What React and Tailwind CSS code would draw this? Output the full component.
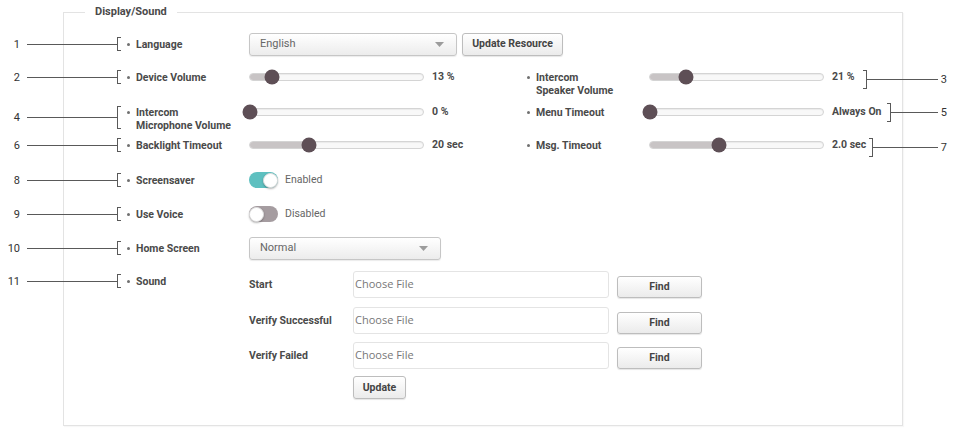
import React from 'react'

const line = 'bg-[#595959]'

function LeftCallout({ n, box = 'h-[24px]', bracket = 'h-[14px]' }) {
  return (
    <div className={`absolute top-0 left-[-127px] flex w-[121px] items-center ${box}`}>
      <span className="w-[20px] text-right text-[11px] leading-none text-[#333]">{n}</span>
      <div className={`ml-[7px] h-px flex-1 ${line}`} />
      <div className={`w-[4px] border-y border-l border-[#595959] ${bracket}`} />
    </div>
  )
}

function RightCallout({ n, gap, box = 'h-[24px]', bracket = 'h-[18px]' }) {
  return (
    <div className={`flex flex-1 items-center ${gap} ${box}`}>
      <div className={`w-[4px] border-y border-r border-[#595959] ${bracket}`} />
      <div className={`h-px flex-1 ${line}`} />
      <span className="ml-[3px] text-[11px] leading-none text-[#333]">{n}</span>
    </div>
  )
}

function Label({ children }) {
  return (
    <div className="flex w-[122px] shrink-0 items-start">
      <div className="flex h-[24px] w-[9px] shrink-0 items-center">
        <span className="h-[3px] w-[3px] rounded-full bg-[#707070]" />
      </div>
      <div className="pt-[6px] text-[10.5px] leading-[13px] font-bold text-[#4a4a4a]">{children}</div>
    </div>
  )
}

function Slider({ pct }) {
  return (
    <div className="flex h-[24px] w-[175px] shrink-0 items-center">
      <div className="relative h-[8px] w-full rounded-full border border-[#d4d4d4] bg-[#f8f8f8] shadow-[inset_0_1px_1px_rgba(0,0,0,0.06)]">
        <div className="h-full rounded-l-full bg-[#c8c4c5]" style={{ width: `${pct}%` }} />
        <div
          className="absolute top-1/2 h-[15px] w-[15px] -translate-x-1/2 -translate-y-1/2 rounded-full bg-[#5e4f56]"
          style={{ left: `${pct}%` }}
        />
      </div>
    </div>
  )
}

function Value({ children, w = 'w-[95px]' }) {
  return (
    <div className={`ml-[8px] shrink-0 text-[10.5px] leading-[24px] font-bold text-[#4a4a4a] ${w}`}>{children}</div>
  )
}

function Toggle({ on, text }) {
  return (
    <div className="flex h-[24px] items-center">
      <div
        className={`flex h-[16px] w-[29px] items-center rounded-full ${
          on ? 'justify-end bg-[#5ec0c0]' : 'justify-start bg-[#a59ca0]'
        }`}
      >
        <span className="h-[15px] w-[15px] rounded-full border border-[#e0e0e0] bg-white shadow-[0_1px_2px_rgba(0,0,0,0.3)]" />
      </div>
      <span className="ml-[7px] text-[10.5px] text-[#666]">{text}</span>
    </div>
  )
}

function Select({ value, w }) {
  return (
    <div
      className={`flex h-[23px] items-center justify-between rounded-[3px] border border-[#c6c6c6] bg-linear-to-b from-white to-[#ececec] pr-[12px] pl-[10px] text-[11px] text-[#666] shadow-[0_1px_1px_rgba(0,0,0,0.08)] ${w}`}
    >
      <span>{value}</span>
      <svg width="9" height="5" viewBox="0 0 9 5">
        <path d="M0 0h9L4.5 5z" fill="#9c9c9c" />
      </svg>
    </div>
  )
}

function Button({ children, className = '' }) {
  return (
    <button
      className={`flex items-center justify-center rounded-[3px] border border-[#bdbdbd] bg-linear-to-b from-white to-[#ebebeb] text-[10.5px] font-bold text-[#444] shadow-[0_1px_1px_rgba(0,0,0,0.1)] ${className}`}
    >
      {children}
    </button>
  )
}

function FileRow({ label, className = '' }) {
  return (
    <div className={`flex h-[27px] items-center ${className}`}>
      <div className="w-[104px] shrink-0 text-[10.5px] font-bold text-[#4a4a4a]">{label}</div>
      <div className="flex h-[27px] w-[256px] items-center rounded-[3px] border border-[#e4e4e4] bg-white pl-[1px] font-['Open_Sans'] text-[11px] text-[#777]">
        Choose File
      </div>
      <Button className="ml-[8px] h-[22px] w-[85px] self-end">Find</Button>
    </div>
  )
}

export default function App() {
  return (
    <div className="h-[434px] w-[956px] overflow-hidden bg-white font-['Roboto',sans-serif] text-[#4a4a4a]">
      <fieldset className="mt-[4px] ml-[63px] h-[422px] w-[840px] min-w-0 border border-[#e3e3e3] shadow-[1px_1px_1px_rgba(0,0,0,0.03)]">
        <legend className="ml-[21px] px-[10px] text-[11px] leading-[16px] font-bold text-[#4a4a4a]">Display/Sound</legend>

        <div className="pt-[12px] pl-[63px]">
          {/* Language */}
          <div className="relative flex h-[33px] items-start">
            <LeftCallout n="1" />
            <Label>Language</Label>
            <div className="flex h-[24px] items-center">
              <Select value="English" w="w-[208px]" />
              <Button className="ml-[5px] h-[23px] w-[101px]">Update Resource</Button>
            </div>
          </div>

          {/* Device volume / speaker volume */}
          <div className="relative flex h-[35px] items-start">
            <LeftCallout n="2" />
            <Label>Device Volume</Label>
            <Slider pct={13} />
            <Value>13 %</Value>
            <Label>
              Intercom
              <br />
              Speaker Volume
            </Label>
            <Slider pct={21} />
            <div className="ml-[8px] flex w-[115px] shrink-0 items-start">
              <span className="text-[10.5px] leading-[24px] font-bold">21 %</span>
              <RightCallout n="3" gap="ml-[9px]" box="h-[28px]" bracket="h-[19px]" />
            </div>
          </div>

          {/* Mic volume / menu timeout */}
          <div className="relative flex h-[33px] items-start">
            <LeftCallout n="4" box="h-[34px]" bracket="h-[23px]" />
            <Label>
              Intercom
              <br />
              Microphone Volume
            </Label>
            <Slider pct={0} />
            <Value>0 %</Value>
            <Label>Menu Timeout</Label>
            <Slider pct={0} />
            <div className="ml-[8px] flex w-[115px] shrink-0 items-start">
              <span className="text-[10.5px] leading-[24px] font-bold">Always On</span>
              <RightCallout n="5" gap="ml-[5px]" box="h-[25px]" bracket="h-[19px]" />
            </div>
          </div>

          {/* Backlight / msg timeout */}
          <div className="relative flex h-[35px] items-start">
            <LeftCallout n="6" />
            <Label>Backlight Timeout</Label>
            <Slider pct={34} />
            <Value>20 sec</Value>
            <Label>Msg. Timeout</Label>
            <Slider pct={40} />
            <div className="ml-[8px] flex w-[115px] shrink-0 items-start">
              <span className="text-[10.5px] leading-[24px] font-bold">2.0 sec</span>
              <RightCallout n="7" gap="ml-[3px]" box="h-[28px]" bracket="h-[19px]" />
            </div>
          </div>

          {/* Screensaver */}
          <div className="relative flex h-[34px] items-start">
            <LeftCallout n="8" />
            <Label>Screensaver</Label>
            <Toggle on text="Enabled" />
          </div>

          {/* Use voice */}
          <div className="relative flex h-[34px] items-start">
            <LeftCallout n="9" />
            <Label>Use Voice</Label>
            <Toggle text="Disabled" />
          </div>

          {/* Home screen */}
          <div className="relative flex h-[33px] items-start">
            <LeftCallout n="10" />
            <Label>Home Screen</Label>
            <div className="flex h-[24px] items-center">
              <Select value="Normal" w="w-[192px]" />
            </div>
          </div>

          {/* Sound */}
          <div className="relative flex items-start">
            <LeftCallout n="11" />
            <Label>Sound</Label>
            <div className="flex flex-col pt-[2px]">
              <FileRow label="Start" />
              <FileRow label="Verify Successful" className="mt-[9px]" />
              <FileRow label="Verify Failed" className="mt-[8px]" />
              <Button className="mt-[7px] ml-[104px] h-[23px] w-[53px]">Update</Button>
            </div>
          </div>
        </div>
      </fieldset>
    </div>
  )
}
